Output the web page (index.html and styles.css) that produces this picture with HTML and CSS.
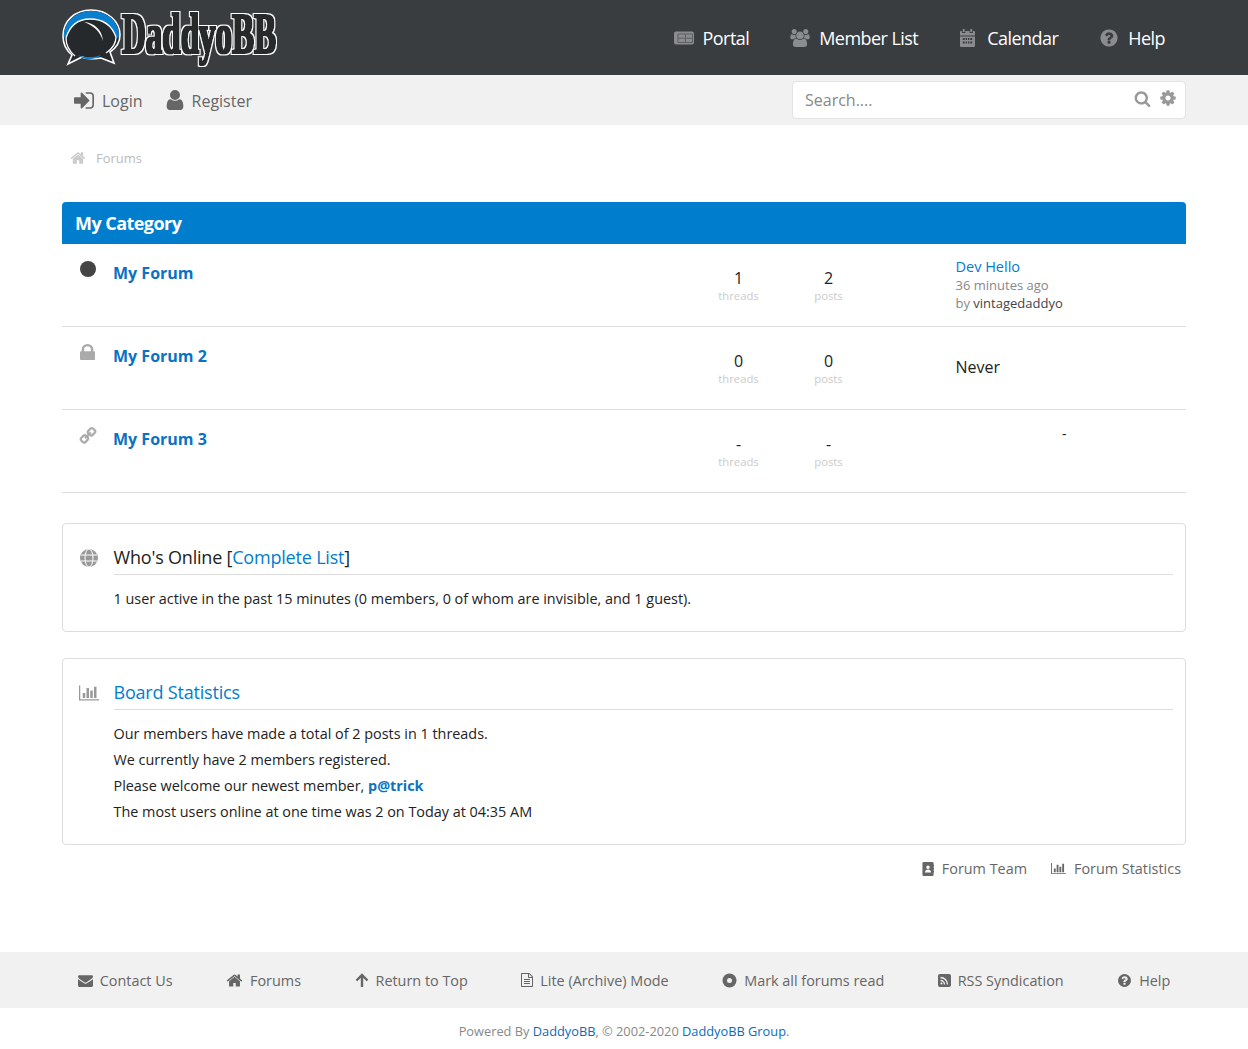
FILE: index.html
```html
<!DOCTYPE html>
<html>
	<head>
		<meta charset="UTF-8">
		<title>Forums</title>
		<link rel="stylesheet" href="styles.css">
	</head>
	<body>
		<svg class="defs" width="0" height="0">
			<symbol id="i-home" viewBox="0 0 1792 1792"><path d="M1472 992v480q0 26-19 45t-45 19h-384v-384h-256v384h-384q-26 0-45-19t-19-45v-480q0-1 .5-3t.5-3l575-474 575 474q1 2 1 6zm223-69l-62 74q-8 9-21 11h-3q-13 0-21-7l-692-577-692 577q-12 8-24 7-13-2-21-11l-62-74q-8-10-7-23.5t11-21.5l719-599q32-26 76-26t76 26l244 204v-195q0-14 9-23t23-9h192q14 0 23 9t9 23v408l219 182q10 8 11 21.5t-7 23.5z"/></symbol>
			<symbol id="i-help" viewBox="0 0 1792 1792"><path d="M1024 1376v-192q0-14-9-23t-23-9h-192q-14 0-23 9t-9 23v192q0 14 9 23t23 9h192q14 0 23-9t9-23zm256-672q0-88-55.5-163t-138.5-116-170-41q-243 0-371 213-15 24 8 42l132 100q7 6 19 6 16 0 25-12 53-68 86-92 34-24 86-24 48 0 85.5 26t37.5 59q0 38-20 61t-68 45q-63 28-115.5 86.5t-52.5 125.5v36q0 14 9 23t23 9h192q14 0 23-9t9-23q0-19 21.5-49.5t54.5-49.5q32-18 49-28.5t46-35 44.5-48 28-60.5 12.5-81zm384 192q0 209-103 385.5t-279.5 279.5-385.5 103-385.5-103-279.5-279.5-103-385.5 103-385.5 279.5-279.5 385.5-103 385.5 103 279.5 279.5 103 385.5z"/></symbol>
			<symbol id="i-chart" viewBox="0 0 2048 1792"><path d="M640 896v512h-256v-512h256zm384-512v1024h-256v-1024h256zm1024 1152v128h-2048v-1536h128v1408h1920zm-640-896v768h-256v-768h256zm384-384v1152h-256v-1152h256z"/></symbol>
			<filter id="logo-fx" x="-5%" y="-10%" width="110%" height="125%">
				<feMorphology in="SourceAlpha" operator="dilate" radius="2" result="outer"/>
				<feFlood flood-color="#fff"/>
				<feComposite in2="outer" operator="in" result="white"/>
				<feMorphology in="SourceAlpha" operator="dilate" radius="1" result="inner"/>
				<feFlood flood-color="#26292b"/>
				<feComposite in2="inner" operator="in" result="dark"/>
				<feMerge><feMergeNode in="white"/><feMergeNode in="dark"/></feMerge>
			</filter>
		</svg>

		<header class="topbar">
			<div class="wrap topbar-in">
				<a class="logo" href="#">
					<svg width="340" height="64" viewBox="0 0 340 64">
						<path d="M29 1C13 1 1 12 1 27c0 8 4 15 9 19L6 55l14-7c4 2 14 2 19 1l13 5-4-11c6-4 10-10 10-17C58 12 45 1 29 1z" fill="#26292b" stroke="#fff" stroke-width="1.600"/>
						<path d="M2 28C1 12 15 2 29 2c15 0 29 10 28 26-1 1-2 1-3 0C50 17 41 10 28 10 17 10 8 16 4 28c-1 1-2 1-2 0z" fill="#0a7ecf"/>
						<path d="M4 29C8 16 17 10 28 10c13 0 22 7 26 18" fill="none" stroke="#fff" stroke-width="1.300"/>
						<path d="M4 29c0 7 3 13 9 18M54 28c0 7-4 12-10 16" fill="none" stroke="#fff" stroke-width="1.300"/>
						<path d="M22 13c10 1 18 7 19 19-3-10-9-15-19-19z" fill="#fff"/>
						<path d="M16 46c7 3 15 3 23 0-5 5-17 6-23 0z" fill="#0a7ecf"/>
						<g filter="url(#logo-fx)">
							<text class="logo-text" x="60" y="44" textLength="154" lengthAdjust="spacingAndGlyphs">DaddyoBB</text>
						</g>
					</svg>
				</a>
				<nav class="mainnav">
					<a href="#">
						<svg class="ico" width="20" height="14" viewBox="0 0 20 14"><rect y=".5" width="20" height="13" rx="2"/><path d="M4 3h14.500v8.500H4zM4 7.200h14.500M11.500 3v8.500" fill="none" stroke="#5d6062"/></svg>
						Portal
					</a>
					<a class="members" href="#">
						<svg class="ico" width="22" height="18" viewBox="0 0 1920 1792"><path d="M593 896q-162 5-265 128h-134q-82 0-138-40.5t-56-118.5q0-353 124-353 6 0 43.5 21t97.5 42.5 119 21.5q67 0 133-23-5 37-5 66 0 139 81 256zm1071 637q0 120-73 189.5t-194 69.5h-874q-121 0-194-69.5t-73-189.5q0-53 3.5-103.5t14-109 26.5-108.5 43-97.5 62-81 85.5-53.5 111.5-20q10 0 43 21.5t73 48 107 48 135 21.5 135-21.5 107-48 73-48 43-21.5q61 0 111.5 20t85.5 53.5 62 81 43 97.5 26.5 108.5 14 109 3.5 103.5zm-1024-1277q0 106-75 181t-181 75-181-75-75-181 75-181 181-75 181 75 75 181zm704 384q0 159-112.5 271.5t-271.5 112.5-271.5-112.5-112.5-271.5 112.5-271.5 271.5-112.5 271.5 112.5 112.5 271.5zm576 225q0 78-56 118.5t-138 40.5h-134q-103-123-265-128 81-117 81-256 0-29-5-66 66 23 133 23 59 0 119-21.5t97.5-42.5 43.5-21q124 0 124 353zm-128-609q0 106-75 181t-181 75-181-75-75-181 75-181 181-75 181 75 75 181z"/></svg>
						Member List
					</a>
					<a class="cal" href="#">
						<svg class="ico" width="15" height="18" viewBox="0 0 16 18" preserveAspectRatio="none"><path fill-rule="evenodd" d="M3 0h2v3H3V0zm8 0h2v3h-2V0zM1 2h1.200v2h3.600V2h4.400v2h3.600V2H15a1 1 0 0 1 1 1v14a1 1 0 0 1-1 1H1a1 1 0 0 1-1-1V3a1 1 0 0 1 1-1zm-1 4.500v1h16v-1H0zM3 9v2h2V9H3zm3 0v2h1.500V9H6zm2.500 0v2H10V9H8.500zM11 9v2h2V9h-2zM3 12.500v2h2v-2H3zm3 0v2h1.500v-2H6zm2.500 0v2H10v-2H8.500zm2.500 0v2h2v-2h-2z"/></svg>
						Calendar
					</a>
					<a href="#">
						<svg class="ico" width="20" height="20"><use href="#i-help"/></svg>
						Help
					</a>
				</nav>
			</div>
		</header>

		<div class="subbar">
			<div class="wrap subbar-in">
				<div class="usernav">
					<a href="#">
						<svg class="ico" width="20" height="17" viewBox="128 256 1536 1280"><path d="M1312 896q0 26-19 45l-544 544q-19 19-45 19t-45-19-19-45v-288h-448q-26 0-45-19t-19-45v-384q0-26 19-45t45-19h448v-288q0-26 19-45t45-19 45 19l544 544q19 19 19 45zm352-352v704q0 119-84.500 203.500t-203.500 84.500h-320q-13 0-22.500-9.500t-9.500-22.500q0-4-1-20t-.5-26.500 3-23.500 10-19.500 20.500-6.500h320q66 0 113-47t47-113v-704q0-66-47-113t-113-47h-312l-11.500-1-11.500-3-8-5.500-7-9-2-13.500q0-4-1-20t-.5-26.500 3-23.500 10-19.500 20.500-6.500h320q119 0 203.500 84.500t84.500 203.500z"/></svg>
						Login
					</a>
					<a href="#">
						<svg class="ico" width="18" height="20" viewBox="256 128 1280 1536"><path d="M1536 1399q0 109-62.500 187t-150.500 78h-854q-88 0-150.500-78t-62.500-187q0-85 8.500-160.500t31.500-152 58.500-131 94-89 134.500-34.500q131 128 313 128t313-128q76 0 134.500 34.500t94 89 58.500 131 31.500 152 8.500 160.500zm-256-887q0 159-112.500 271.500t-271.500 112.500-271.500-112.500-112.500-271.500 112.500-271.500 271.500-112.500 271.500 112.500 112.500 271.500z"/></svg>
						Register
					</a>
				</div>
				<div class="searchbox">
					<span class="search-ph">Search....</span>
					<svg class="ico" width="17" height="17" viewBox="0 0 1792 1792"><path d="M1216 832q0-185-131.500-316.500t-316.500-131.500-316.500 131.500-131.500 316.500 131.500 316.500 316.500 131.500 316.500-131.500 131.500-316.500zm512 832q0 52-38 90t-90 38q-54 0-90-38l-343-342q-179 124-399 124-143 0-273.500-55.500t-225-150-150-225-55.500-273.500 55.500-273.500 150-225 225-150 273.500-55.500 273.500 55.500 225 150 150 225 55.500 273.500q0 220-124 399l343 343q37 37 37 90z"/></svg>
					<svg class="ico" width="18" height="18" viewBox="0 0 1792 1792"><path d="M1152 896q0-106-75-181t-181-75-181 75-75 181 75 181 181 75 181-75 75-181zm512-109v222q0 12-8 23t-20 13l-185 28q-19 54-39 91 35 50 107 138 10 12 10 25t-9 23q-27 37-99 108t-94 71q-12 0-26-9l-138-108q-44 23-91 38-16 136-29 186-7 28-36 28h-222q-14 0-24.500-8.500t-11.500-21.500l-28-184q-49-16-90-37l-141 107q-10 9-25 9-14 0-25-11-126-114-165-168-7-10-7-23 0-12 8-23 15-21 51-66.500t54-70.500q-27-50-41-99l-183-27q-13-2-21-12.500t-8-23.500v-222q0-12 8-23t19-13l186-28q14-46 39-92-40-57-107-138-10-12-10-24 0-10 9-23 26-36 98.500-107.500t94.500-71.500q13 0 26 10l138 107q44-23 91-38 16-136 29-186 7-28 36-28h222q14 0 24.500 8.500t11.500 21.500l28 184q49 16 90 37l142-107q9-9 24-9 13 0 25 10 129 119 165 170 7 8 7 22 0 12-8 23-15 21-51 66.500t-54 70.500q26 50 41 98l183 28q13 2 21 12.500t8 23.500z"/></svg>
				</div>
			</div>
		</div>

		<main class="wrap">
			<div class="crumbs">
				<svg class="ico" width="16" height="16"><use href="#i-home"/></svg>
				<a href="#">Forums</a>
			</div>

			<section class="category">
				<h2 class="cat-head">My Category</h2>

				<div class="forum">
					<div class="forum-ico"><span class="dot"></span></div>
					<a class="forum-name" href="#">My Forum</a>
					<div class="stat"><b>1</b><small>threads</small></div>
					<div class="stat"><b>2</b><small>posts</small></div>
					<div class="last">
						<a href="#">Dev Hello</a>
						<span>36 minutes ago</span>
						<span>by <em>vintagedaddyo</em></span>
					</div>
				</div>

				<div class="forum">
					<div class="forum-ico">
						<svg class="ico" width="15" height="16" viewBox="320 128 1152 1408" preserveAspectRatio="none"><path d="M640 768h512v-192q0-106-75-181t-181-75-181 75-75 181v192zm832 96v576q0 40-28 68t-68 28h-960q-40 0-68-28t-28-68v-576q0-40 28-68t68-28h32v-192q0-184 132-316t316-132 316 132 132 316v192h32q40 0 68 28t28 68z"/></svg>
					</div>
					<a class="forum-name" href="#">My Forum 2</a>
					<div class="stat"><b>0</b><small>threads</small></div>
					<div class="stat"><b>0</b><small>posts</small></div>
					<div class="last last-never">Never</div>
				</div>

				<div class="forum">
					<div class="forum-ico">
						<svg class="ico flip" width="18" height="18" viewBox="0 0 1792 1792"><path d="M1520 1216q0-40-28-68l-208-208q-28-28-68-28-42 0-72 32 3 3 19 18.500t21.500 21.500 15 19 13 25.500 3.500 27.500q0 40-28 68t-68 28q-15 0-27.500-3.500t-25.500-13-19-15-21.500-21.500-18.500-19q-33 31-33 73 0 40 28 68l206 207q27 27 68 27 40 0 68-26l147-146q28-28 28-67zm-703-705q0-40-28-68l-206-207q-28-28-68-28-39 0-68 27l-147 146q-28 28-28 67 0 40 28 68l208 208q27 27 68 27 42 0 72-31-3-3-19-18.500t-21.500-21.500-15-19-13-25.500-3.500-27.500q0-40 28-68t68-28q15 0 27.500 3.500t25.500 13 19 15 21.500 21.500 18.500 19q33-31 33-73zm895 705q0 120-85 203l-147 146q-83 83-203 83-121 0-204-85l-206-207q-83-83-83-203 0-123 88-209l-88-88q-86 88-208 88-120 0-204-84l-208-208q-84-84-84-204t85-203l147-146q83-83 203-83 121 0 204 85l206 207q83 83 83 203 0 123-88 209l88 88q86-88 208-88 120 0 204 84l208 208q84 84 84 204z"/></svg>
					</div>
					<a class="forum-name" href="#">My Forum 3</a>
					<div class="stat"><b>-</b><small>threads</small></div>
					<div class="stat"><b>-</b><small>posts</small></div>
					<div class="last last-none">-</div>
				</div>
			</section>

			<section class="box box-online">
				<div class="box-ico">
					<svg width="18" height="18" viewBox="0 0 18 18"><circle cx="9" cy="9" r="9" fill="#999"/><g fill="none" stroke="#fff" stroke-width="1"><ellipse cx="9" cy="9" rx="4" ry="9"/><path d="M1 6h16M1 12h16"/></g></svg>
				</div>
				<div class="box-main">
					<h3 class="box-head">Who's Online [<a href="#">Complete List</a>]</h3>
					<p>1 user active in the past 15 minutes (0 members, 0 of whom are invisible, and 1 guest).</p>
				</div>
			</section>

			<section class="box box-stats">
				<div class="box-ico">
					<svg class="ico chart" width="20" height="18"><use href="#i-chart"/></svg>
				</div>
				<div class="box-main">
					<h3 class="box-head"><a href="#">Board Statistics</a></h3>
					<p>Our members have made a total of 2 posts in 1 threads.</p>
					<p>We currently have 2 members registered.</p>
					<p>Please welcome our newest member, <a class="strong" href="#">p@trick</a></p>
					<p>The most users online at one time was 2 on Today at 04:35 AM</p>
				</div>
			</section>

			<div class="quicklinks">
				<a href="#">
					<svg class="ico" width="12" height="14" viewBox="0 0 14 16" preserveAspectRatio="none"><path fill-rule="evenodd" d="M2 0h10a1.500 1.500 0 0 1 1.500 1.500V3H14v2h-.5v1.500H14v2h-.5V10H14v2h-.5v2.500A1.500 1.500 0 0 1 12 16H2a1.500 1.500 0 0 1-1.500-1.500v-13A1.500 1.500 0 0 1 2 0zm5 4a2 2 0 1 0 0 4 2 2 0 0 0 0-4zM3.500 12h7c0-2-1.500-3.300-3.500-3.300S3.500 10 3.500 12z"/></svg>
					Forum Team
				</a>
				<a href="#">
					<svg class="ico" width="15" height="13"><use href="#i-chart"/></svg>
					Forum Statistics
				</a>
			</div>
		</main>

		<footer>
			<nav class="footnav">
				<a href="#">
					<svg class="ico" width="15" height="15" viewBox="0 0 1792 1792"><path d="M1792 710v794q0 66-47 113t-113 47h-1472q-66 0-113-47t-47-113v-794q44 49 101 87 362 246 497 345 57 42 92.500 65.500t94.500 48 110 24.500h2q51 0 110-24.500t94.500-48 92.500-65.500q170-123 498-345 57-39 100-87zm0-294q0 79-49 151t-122 123q-376 261-468 325-10 7-42.500 30.500t-54 38-52 32.500-57.500 27-50 9h-2q-23 0-50-9t-57.500-27-52-32.500-54-38-42.500-30.500q-91-64-262-182.500t-205-142.500q-62-42-117-115.500t-55-136.500q0-78 41.500-130t118.500-52h1472q65 0 112.500 47t47.500 113z"/></svg>
					Contact Us
				</a>
				<a href="#">
					<svg class="ico" width="17" height="17"><use href="#i-home"/></svg>
					Forums
				</a>
				<a href="#">
					<svg width="14" height="14" viewBox="0 0 14 14"><path d="M7 14V2M1.500 7.500L7 2l5.500 5.500" fill="none" stroke="#666" stroke-width="2.400"/></svg>
					Return to Top
				</a>
				<a href="#">
					<svg class="ico" width="12" height="14" viewBox="128 0 1536 1792" preserveAspectRatio="none"><path d="M1596 380q28 28 48 76t20 88v1152q0 40-28 68t-68 28h-1344q-40 0-68-28t-28-68v-1600q0-40 28-68t68-28h896q40 0 88 20t76 48zm-444-244v376h376q-10-29-22-41l-313-313q-12-12-41-22zm384 1528v-1024h-416q-40 0-68-28t-28-68v-416h-768v1536h1280zm-1024-864q0-14 9-23t23-9h704q14 0 23 9t9 23v64q0 14-9 23t-23 9h-704q-14 0-23-9t-9-23v-64zm736 224q14 0 23 9t9 23v64q0 14-9 23t-23 9h-704q-14 0-23-9t-9-23v-64q0-14 9-23t23-9h704zm0 256q14 0 23 9t9 23v64q0 14-9 23t-23 9h-704q-14 0-23-9t-9-23v-64q0-14 9-23t23-9h704z"/></svg>
					Lite (Archive) Mode
				</a>
				<a href="#">
					<svg width="15" height="15" viewBox="0 0 15 15"><circle cx="7.500" cy="7.500" r="7" fill="#666"/><circle cx="7.500" cy="7.500" r="2.500" fill="#f1f1f1"/></svg>
					Mark all forums read
				</a>
				<a href="#">
					<svg width="13" height="13" viewBox="0 0 13 13"><rect width="13" height="13" rx="2" fill="#666"/><g fill="none" stroke="#f1f1f1" stroke-width="1.300"><path d="M2.500 6.500a4 4 0 0 1 4 4"/><path d="M2.500 3.500a7 7 0 0 1 7 7"/></g><circle cx="3.500" cy="9.500" r="1.100" fill="#f1f1f1"/></svg>
					RSS Syndication
				</a>
				<a href="#">
					<svg class="ico" width="15" height="15"><use href="#i-help"/></svg>
					Help
				</a>
			</nav>
			<p class="copy">Powered By <a href="#">DaddyoBB</a>, © 2002-2020 <a href="#">DaddyoBB Group</a>.</p>
		</footer>
	</body>
</html>
```

FILE: styles.css
```css
* { box-sizing: border-box; }
html, body {
	margin: 0;
	padding: 0;
	background: #fff;
	font-family: "Open Sans", sans-serif;
	color: #222;
}
a { color: #017dce; text-decoration: none; }
.defs { position: absolute; }
.ico { fill: currentColor; flex: none; }
.flip { transform: scaleX(-1); margin-left: -1px; stroke: currentColor; stroke-width: 40px; }
.wrap { width: 1124px; margin: 0 auto; }

/* top */
.topbar { background: #3a3d40; height: 75px; }
.topbar-in { display: flex; justify-content: space-between; align-items: center; height: 75px; }
.logo { display: block; align-self: flex-start; margin-top: 9px; }
.logo svg { display: block; }
.logo-text {
	font-family: "Liberation Serif", serif;
	font-weight: bold;
	font-size: 58px;
	fill: #000;
}
.mainnav { display: flex; gap: 41px; padding-right: 21px; }
.mainnav a {
	display: flex;
	align-items: center;
	gap: 9px;
	color: #fff;
	font-size: 18px;
	letter-spacing: -.55px;
}
.mainnav .ico { color: #8a8c8e; }
.mainnav .members { gap: 8px; margin-left: -1px; }
.mainnav .cal { gap: 12px; margin-left: 1px; }

.subbar { background: #f1f1f1; height: 50px; }
.subbar-in { display: flex; justify-content: space-between; align-items: center; height: 50px; }
.usernav { display: flex; gap: 23px; padding-left: 12px; }
.usernav a {
	display: flex;
	align-items: center;
	gap: 8px;
	padding-top: 2px;
	color: #666;
	font-size: 16px;
}
.usernav .ico { margin-top: -2px; }
.searchbox {
	width: 394px;
	height: 38px;
	background: #fff;
	border: 1px solid #e3e3e3;
	border-radius: 4px;
	display: flex;
	align-items: center;
	gap: 8px;
	padding: 0 8px 4px 12px;
	color: #999;
}
.search-ph { flex: 1; font-size: 16px; color: #888; padding-top: 4px; }

.crumbs {
	height: 77px;
	padding: 25px 0 0 8px;
	display: flex;
	align-items: flex-start;
	gap: 10px;
	font-size: 13px;
	line-height: 16px;
	color: #ccc;
}
.crumbs a { color: #bbb; }

/* forum table */
.cat-head {
	margin: 0;
	height: 42px;
	padding: 0 13px;
	background: #017dce;
	border-radius: 4px 4px 0 0;
	color: #fff;
	font-size: 18px;
	line-height: 42px;
	font-weight: 700;
	letter-spacing: -.55px;
}
.forum {
	display: grid;
	grid-template-columns: 51px 1fr 90px 90px 312.500px;
	height: 83px;
	border-bottom: 1px solid #ddd;
}
.forum-ico { padding: 17px 0 0 18px; color: #aaa; line-height: 0; }
.dot { display: block; width: 16px; height: 16px; border-radius: 50%; background: #444; }
.forum-name {
	font-size: 16px;
	font-weight: 700;
	line-height: 22px;
	padding-top: 18px;
	color: #0a72c4;
}
.stat { text-align: center; padding-top: 24px; }
.stat b { display: block; font-weight: 400; font-size: 16px; line-height: 20px; color: #222; }
.stat small { display: block; font-size: 11.300px; line-height: 16px; color: #ccc; }
.last {
	padding: 14px 13px 0 82px;
	font-size: 13px;
	line-height: 18px;
	color: #888;
}
.last a, .last span { display: block; }
.last a { font-size: 14.500px; }
.last em { font-style: normal; color: #444; }
.last-never { padding-top: 30px; font-size: 16px; line-height: 20px; color: #222; }
.last-none { padding-top: 15px; text-align: center; font-size: 14px; color: #222; }

/* boxes */
.box {
	display: flex;
	border: 1px solid #ddd;
	border-radius: 4px;
	padding-right: 12px;
}
.box-online { margin-top: 30px; height: 109px; }
.box-stats { margin-top: 26px; height: 187px; }
.box-ico { width: 50.500px; padding: 25px 0 0 17px; line-height: 0; color: #999; }
.chart { margin-left: -1px; }
.box-main { flex: 1; }
.box-head {
	margin: 0 0 11px;
	padding-top: 17px;
	height: 51px;
	border-bottom: 1px solid #ddd;
	font-size: 18px;
	line-height: 32px;
	font-weight: 400;
	letter-spacing: -.2px;
	color: #222;
}
.box-main p { margin: 0; font-size: 14.400px; line-height: 26px; color: #222; }
.strong { font-weight: 700; color: #0a72c4; }

.quicklinks {
	display: flex;
	justify-content: flex-end;
	gap: 24px;
	padding: 14px 5px 0 0;
	height: 107px;
}
.quicklinks a {
	display: flex;
	align-items: flex-start;
	gap: 8px;
	font-size: 14.400px;
	line-height: 20px;
	color: #666;
}
.quicklinks .ico { margin-top: 3px; }

/* footer */
.footnav {
	background: #f1f1f1;
	height: 56px;
	display: flex;
	justify-content: center;
	align-items: center;
	gap: 53.500px;
}
.footnav a {
	display: flex;
	align-items: center;
	gap: 7px;
	font-size: 14.400px;
	color: #666;
}
.copy {
	margin: 0;
	height: 41px;
	padding-top: 14px;
	text-align: center;
	font-size: 12.800px;
	line-height: 18px;
	color: #888;
}
.copy a { color: #0a6cb8; }
```
